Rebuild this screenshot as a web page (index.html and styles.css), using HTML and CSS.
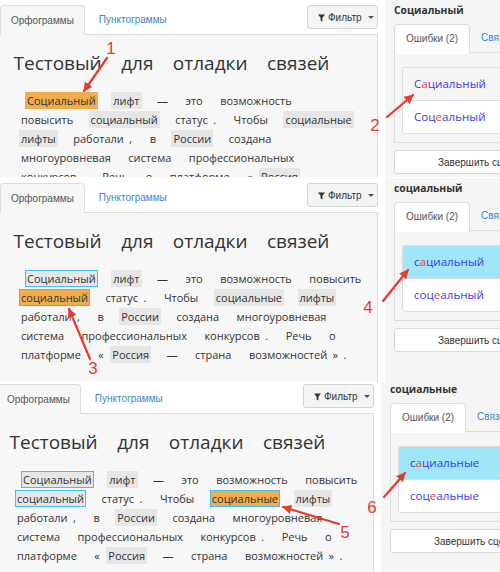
FILE: index.html
```html
<!DOCTYPE html>
<html lang="ru">
<head>
<meta charset="utf-8">
<title>Орфограммы</title>
<link rel="stylesheet" href="styles.css">
</head>
<body>
<div class="page">

  <section class="shot shot1">
    <div class="frame">
      <div class="main">
        <div class="toolbar">
          <div class="tabs">
            <div class="tab active">Орфограммы</div>
            <div class="tab link">Пунктограммы</div>
          </div>
          <button class="filter"><svg class="funnel" viewBox="0 0 10 10" width="7" height="8"><path d="M0 0H10L6.3 4.6V10L3.7 8.6V4.6Z"/></svg>Фильтр<span class="caret"></span></button>
        </div>
        <div class="pane">
          <h1 class="title">Тестовый для отладки связей</h1>
          <p class="text narrow"><span class="w hl on">Социальный</span> <span class="w hl">лифт</span> <span class="w">—</span> <span class="w">это</span> <span class="w">возможность</span> <span class="w">повысить</span> <span class="w hl">социальный</span> <span class="w">статус</span> <span class="w pt">.</span> <span class="w">Чтобы</span> <span class="w hl">социальные</span> <span class="w hl">лифты</span> <span class="w">работали</span> <span class="w pt">,</span> <span class="w">в</span> <span class="w hl">России</span> <span class="w">создана</span> <span class="w">многоуровневая</span> <span class="w">система</span> <span class="w">профессиональных</span> <span class="w">конкурсов</span> <span class="w pt">.</span> <span class="w">Речь</span> <span class="w">о</span> <span class="w">платформе</span> <span class="w lq">«</span> <span class="w hl">Россия</span> <span class="w">—</span> <span class="w">страна</span> <span class="w">возможностей</span> <span class="w pt">»</span> <span class="w pt">.</span></p>
        </div>
      </div>
      <aside class="side">
        <div class="word">Социальный</div>
        <div class="stabs">
          <div class="stab active">Ошибки (2)</div>
          <div class="stab link">Связи</div>
        </div>
        <div class="spane">
          <div class="list">
            <div class="item hover"><span class="b">С</span><span class="r">а</span><span class="b">циальный</span></div>
            <div class="item"><span class="b">Соц</span><span class="r">е</span><span class="b">альный</span></div>
          </div>
        </div>
        <button class="finish">Завершить сценарий</button>
      </aside>
    </div>
  </section>

  <section class="shot shot2">
    <div class="frame">
      <div class="main">
        <div class="toolbar">
          <div class="tabs">
            <div class="tab active">Орфограммы</div>
            <div class="tab link">Пунктограммы</div>
          </div>
          <button class="filter"><svg class="funnel" viewBox="0 0 10 10" width="7" height="8"><path d="M0 0H10L6.3 4.6V10L3.7 8.6V4.6Z"/></svg>Фильтр<span class="caret"></span></button>
        </div>
        <div class="pane">
          <h1 class="title">Тестовый для отладки связей</h1>
          <p class="text"><span class="w hl sel">Социальный</span> <span class="w hl">лифт</span> <span class="w">—</span> <span class="w">это</span> <span class="w">возможность</span> <span class="w">повысить</span> <span class="w hl on sel">социальный</span> <span class="w">статус</span> <span class="w pt">.</span> <span class="w">Чтобы</span> <span class="w hl">социальные</span> <span class="w hl">лифты</span> <span class="w">работали</span> <span class="w pt">,</span> <span class="w">в</span> <span class="w hl">России</span> <span class="w">создана</span> <span class="w">многоуровневая</span> <span class="w">система</span> <span class="w">профессиональных</span> <span class="w">конкурсов</span> <span class="w pt">.</span> <span class="w">Речь</span> <span class="w">о</span> <span class="w">платформе</span> <span class="w lq">«</span> <span class="w hl">Россия</span> <span class="w">—</span> <span class="w">страна</span> <span class="w">возможностей</span> <span class="w pt">»</span> <span class="w pt">.</span></p>
        </div>
      </div>
      <aside class="side">
        <div class="word">социальный</div>
        <div class="stabs">
          <div class="stab active">Ошибки (2)</div>
          <div class="stab link">Связи</div>
        </div>
        <div class="spane">
          <div class="list">
            <div class="item picked"><span class="b">с</span><span class="r">а</span><span class="b">циальный</span></div>
            <div class="item"><span class="b">соц</span><span class="r">е</span><span class="b">альный</span></div>
          </div>
        </div>
        <button class="finish">Завершить сценарий</button>
      </aside>
    </div>
  </section>

  <section class="shot shot3">
    <div class="frame">
      <div class="main">
        <div class="toolbar">
          <div class="tabs">
            <div class="tab active">Орфограммы</div>
            <div class="tab link">Пунктограммы</div>
          </div>
          <button class="filter"><svg class="funnel" viewBox="0 0 10 10" width="7" height="8"><path d="M0 0H10L6.3 4.6V10L3.7 8.6V4.6Z"/></svg>Фильтр<span class="caret"></span></button>
        </div>
        <div class="pane">
          <h1 class="title">Тестовый для отладки связей</h1>
          <p class="text"><span class="w hl sel">Социальный</span> <span class="w hl">лифт</span> <span class="w">—</span> <span class="w">это</span> <span class="w">возможность</span> <span class="w">повысить</span> <span class="w hl sel">социальный</span> <span class="w">статус</span> <span class="w pt">.</span> <span class="w">Чтобы</span> <span class="w hl on sel">социальные</span> <span class="w hl">лифты</span> <span class="w">работали</span> <span class="w pt">,</span> <span class="w">в</span> <span class="w hl">России</span> <span class="w">создана</span> <span class="w">многоуровневая</span> <span class="w">система</span> <span class="w">профессиональных</span> <span class="w">конкурсов</span> <span class="w pt">.</span> <span class="w">Речь</span> <span class="w">о</span> <span class="w">платформе</span> <span class="w lq">«</span> <span class="w hl">Россия</span> <span class="w">—</span> <span class="w">страна</span> <span class="w">возможностей</span> <span class="w pt">»</span> <span class="w pt">.</span></p>
        </div>
      </div>
      <aside class="side">
        <div class="word">социальные</div>
        <div class="stabs">
          <div class="stab active">Ошибки (2)</div>
          <div class="stab link">Связи</div>
        </div>
        <div class="spane">
          <div class="list">
            <div class="item picked"><span class="b">с</span><span class="r">а</span><span class="b">циальные</span></div>
            <div class="item"><span class="b">соц</span><span class="r">е</span><span class="b">альные</span></div>
          </div>
        </div>
        <button class="finish">Завершить сценарий</button>
      </aside>
    </div>
  </section>

  <svg class="arrows" width="500" height="572" viewBox="0 0 500 572">
    <defs>
      <marker id="head" viewBox="0 0 10 10" refX="9" refY="5" markerWidth="4.2" markerHeight="4.2" orient="auto" markerUnits="strokeWidth">
        <path d="M0 0L10 5L0 10Z" fill="#e8392f"/>
      </marker>
    </defs>
    <g stroke="#e8392f" stroke-width="2.2" stroke-linecap="round" fill="none" marker-end="url(#head)">
      <line x1="107" y1="58" x2="84" y2="91"/>
      <line x1="387" y1="117" x2="413" y2="95"/>
      <line x1="90" y1="359" x2="69" y2="309"/>
      <line x1="383" y1="301" x2="408" y2="270"/>
      <line x1="339" y1="524" x2="283" y2="507"/>
      <line x1="384" y1="497" x2="405" y2="473"/>
    </g>
    <g class="num" fill="#e8392f">
      <text x="111" y="54">1</text>
      <text x="375" y="131">2</text>
      <text x="93" y="374">3</text>
      <text x="368" y="313">4</text>
      <text x="345" y="538">5</text>
      <text x="372" y="513">6</text>
    </g>
  </svg>
</div>
</body>
</html>
```
FILE: styles.css
```css
* { box-sizing: border-box; }
html, body { margin: 0; padding: 0; }
body {
  width: 500px;
  height: 572px;
  background: #fff;
  font-family: "Open Sans", "Noto Sans", "DejaVu Sans", sans-serif;
  color: #333;
  overflow: hidden;
}
.page { position: relative; width: 500px; height: 572px; overflow: hidden; }

.shot { overflow: hidden; width: 500px; }
.shot1 { height: 177px; }
.shot2 { height: 205px; }
.shot3 { height: 190px; }
.frame { display: flex; width: 620px; align-items: stretch; min-height: 260px; }
.shot2 .frame { margin-top: 1px; }
.shot3 .frame { margin-top: -3px; margin-left: -4px; }

/* main column */
.main { width: 378px; flex: none; padding-top: 5px; display: flex; flex-direction: column; }
.toolbar { display: flex; justify-content: space-between; align-items: flex-start; border-bottom: 1px solid #ddd; height: 30px; }
.tabs { display: flex; }
.tab { font-family: "Liberation Sans", Arial, sans-serif; font-size: 10px; height: 30px; line-height: 30px; padding: 0 10px; color: #555; }
.tab.active { background: #f7f7f7; border: 1px solid #ddd; border-bottom: none; border-radius: 4px 4px 0 0; height: 31px; margin-bottom: -1px; }
.tab.link { color: #3a87c9; margin-left: 4px; }
.filter {
  font-family: "Liberation Sans", Arial, sans-serif; font-size: 10px; color: #333;
  height: 24px; width: 71px; padding: 0 0 0 10px;
  display: flex; align-items: center; gap: 3px;
  background: #f4f4f4; border: 1px solid #d4d4d4; border-radius: 3px;
}
.funnel { fill: #333; margin-top: 1px; }
.caret { width: 0; height: 0; border-top: 3.5px solid #555; border-left: 3px solid transparent; border-right: 3px solid transparent; margin-left: 3px; }

.pane { flex: 1; background: #f7f7f7; border-right: 1px solid #ddd; padding-top: 14px; }
.title { margin: 0 0 0 13.5px; font-size: 19px; font-weight: 400; line-height: 28px; word-spacing: 14.5px; color: #333; white-space: nowrap; }
.text { margin: 14px 0 0 19px; width: 352px; font-size: 11px; line-height: 19px; word-spacing: 10.6px; text-indent: 6px; }
.text.narrow { width: 342px; }
.w { padding: 1px 2px; }
.hl { background: #e6e6e6; }
.on { background: #f0ad4e; }
.sel { box-shadow: inset 0 0 0 1px #3fc3ea; }
.pt { margin-left: -12px; }
.lq { margin-right: -9px; }

/* sidebar */
.side { flex: none; width: 230px; margin-left: 7px; background: #f5f5f5; padding-left: 9px; }
.word { font-size: 10.3px; font-weight: 700; line-height: 20px; color: #333; }
.stabs { display: flex; margin-top: 4px; border-bottom: 1px solid #ddd; height: 29px; }
.stab { font-family: "Liberation Sans", Arial, sans-serif; font-size: 10px; line-height: 28px; padding: 0 11px; color: #555; }
.stab.active { background: #fff; border: 1px solid #ddd; border-bottom: none; border-radius: 4px 4px 0 0; height: 30px; margin-bottom: -1px; }
.stab.link { color: #3a87c9; }
.spane { border: 1px solid #ddd; border-top: none; height: 90px; padding: 14px 0 0 7px; }
.list { background: #fff; border: 1px solid #ddd; border-radius: 3px; }
.item { font-size: 11.6px; line-height: 18px; padding: 7px 11px; height: 32px; }
.item + .item { border-top: 1px solid #ddd; height: 33px; }
.item.hover { background: #f5f5f5; }
.item.picked { background: #9fe6f8; }
.b { color: #3b3bf0; }
.r { color: #f03a3a; }
.finish { display: block; margin-top: 7px; width: 186px; height: 24px; font-family: "Liberation Sans", Arial, sans-serif; font-size: 10px; color: #333; background: #fff; border: 1px solid #d9d9d9; border-radius: 3px; text-align: center; padding: 0; }

/* overlay arrows */
.arrows { position: absolute; left: 0; top: 0; pointer-events: none; }
.num text { font-family: "Liberation Sans", Arial, sans-serif; font-size: 17px; text-anchor: middle; }
```
